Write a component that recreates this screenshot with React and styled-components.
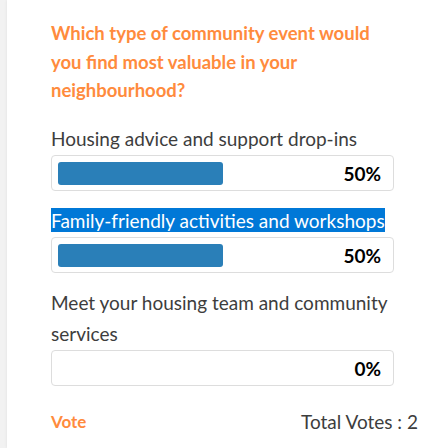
import styled, { createGlobalStyle } from 'styled-components';

const Global = createGlobalStyle`
  body {
    margin: 0;
    background: #f2f2f2;
    font-family: Lato, "Open Sans", sans-serif;
  }
`;

const options = [
  { label: 'Housing advice and support drop-ins', percent: 50 },
  { label: 'Family-friendly activities and workshops', percent: 50, selected: true },
  { label: 'Meet your housing team and community services', percent: 0 },
];

const Card = styled.div`
  margin-left: 7px;
  min-height: 100vh;
  box-sizing: border-box;
  background: #fff;
  box-shadow: 0 0 3px rgba(0, 0, 0, 0.08);
  padding: 19px 15px 0 44px;
`;

const Question = styled.h2`
  margin: 0 0 18px;
  width: 330px;
  color: #ff8b3d;
  font-size: 18.5px;
  font-weight: 700;
  line-height: 28.5px;
`;

const OptionList = styled.div`
  display: flex;
  flex-direction: column;
  gap: 14px;
  width: 343px;
`;

const Option = styled.div`
  display: flex;
  flex-direction: column;
  gap: 1px;
`;

const Label = styled.div`
  color: #3d3d3d;
  font-size: 19px;
  line-height: 31px;
`;

const Selected = styled.span`
  background: #0078d7;
  color: #fff;
  padding: 1px 0 0;
`;

const Result = styled.div`
  display: grid;
  align-items: center;
  height: 36px;
  box-sizing: border-box;
  padding: 6px 6px 5px;
  border: 1px solid #ddd;
  border-radius: 4px;

  & > * {
    grid-area: 1 / 1;
  }
`;

const Track = styled.div`
  height: 23px;
`;

const Fill = styled.div`
  width: ${(p) => p.$percent}%;
  height: 100%;
  background: #2a7fb8;
  border-radius: 3px;
`;

const Percent = styled.span`
  justify-self: end;
  margin-right: 6px;
  color: #000;
  font-size: 19px;
  font-weight: 700;
`;

const Footer = styled.div`
  display: flex;
  justify-content: space-between;
  align-items: center;
  margin-top: 20px;
`;

const VoteLink = styled.a`
  color: #ff8b3d;
  font-size: 17px;
  font-weight: 700;
  text-decoration: none;
`;

const Total = styled.span`
  color: #3d3d3d;
  font-size: 19px;
  line-height: 31px;
`;

export default function App() {
  return (
    <>
      <Global />
      <Card>
        <Question>Which type of community event would you find most valuable in your neighbourhood?</Question>
        <OptionList>
          {options.map((option) => (
            <Option key={option.label}>
              <Label>
                {option.selected ? <Selected>{option.label}</Selected> : option.label}
              </Label>
              <Result>
                <Track>{option.percent > 0 && <Fill $percent={option.percent} />}</Track>
                <Percent>{option.percent}%</Percent>
              </Result>
            </Option>
          ))}
        </OptionList>
        <Footer>
          <VoteLink href="#">Vote</VoteLink>
          <Total>Total Votes : 2</Total>
        </Footer>
      </Card>
    </>
  );
}
